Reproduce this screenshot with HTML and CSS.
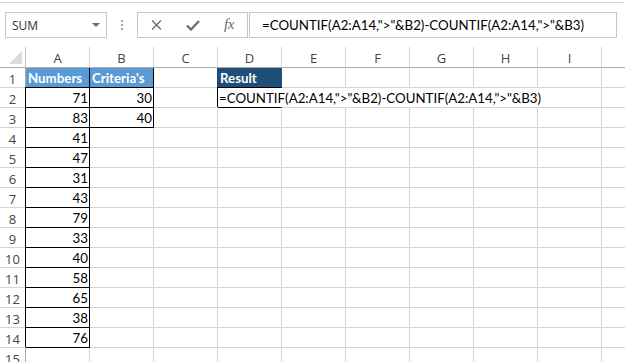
FILE: index.html
```html
<!DOCTYPE html>
<html>
<head>
<meta charset="utf-8">
<link rel="stylesheet" href="styles.css">
</head>
<body>
<div class="toolbar">
  <div class="namebox"><span>SUM</span><svg class="dd" width="8" height="4" viewBox="0 0 8 4"><path d="M0 0H8L4 4Z" fill="#6d6d6d"/></svg></div>
  <div class="grip"><i></i><i></i><i></i></div>
  <div class="fbtns">
    <svg class="ic-x" width="11" height="10" viewBox="0 0 11 10"><path d="M1 0.5L10 9.5M10 0.5L1 9.5" stroke="#707070" stroke-width="1.4" fill="none"/></svg>
    <svg class="ic-ok" width="14" height="11" viewBox="0 0 14 11"><path d="M1 5.5L5 9.5L13 1" stroke="#707070" stroke-width="2.4" fill="none"/></svg>
    <span class="fx">fx</span>
  </div>
  <div class="finput">=COUNTIF(A2:A14,"&gt;"&amp;B2)-COUNTIF(A2:A14,"&gt;"&amp;B3)</div>
</div>
<div class="sheet">
  <div class="corner"><svg width="13" height="13" viewBox="0 0 13 13"><path d="M13 0V13H0Z" fill="#dcdcdc"/></svg></div>
  <div class="ch">A</div><div class="ch">B</div><div class="ch">C</div><div class="ch">D</div><div class="ch">E</div><div class="ch">F</div><div class="ch">G</div><div class="ch">H</div><div class="ch">I</div><div class="ch"></div>

  <div class="rh">1</div><div class="c hd bh">Numbers</div><div class="c hd bh">Criteria's</div><div class="c"></div><div class="c dk">Result</div><div class="c"></div><div class="c"></div><div class="c"></div><div class="c"></div><div class="c"></div><div class="c"></div>

  <div class="rh">2</div><div class="c n bx">71</div><div class="c n bx">30</div><div class="c"></div><div class="c bx fm">=COUNTIF(A2:A14,"&gt;"&amp;B2)-COUNTIF(A2:A14,"&gt;"&amp;B3)</div><div class="c ov"></div><div class="c ov"></div><div class="c ov"></div><div class="c ov"></div><div class="c"></div><div class="c"></div>

  <div class="rh">3</div><div class="c n bx">83</div><div class="c n bx">40</div><div class="c"></div><div class="c"></div><div class="c"></div><div class="c"></div><div class="c"></div><div class="c"></div><div class="c"></div><div class="c"></div>

  <div class="rh">4</div><div class="c n bx">41</div><div class="c"></div><div class="c"></div><div class="c"></div><div class="c"></div><div class="c"></div><div class="c"></div><div class="c"></div><div class="c"></div><div class="c"></div>

  <div class="rh">5</div><div class="c n bx">47</div><div class="c"></div><div class="c"></div><div class="c"></div><div class="c"></div><div class="c"></div><div class="c"></div><div class="c"></div><div class="c"></div><div class="c"></div>

  <div class="rh">6</div><div class="c n bx">31</div><div class="c"></div><div class="c"></div><div class="c"></div><div class="c"></div><div class="c"></div><div class="c"></div><div class="c"></div><div class="c"></div><div class="c"></div>

  <div class="rh">7</div><div class="c n bx">43</div><div class="c"></div><div class="c"></div><div class="c"></div><div class="c"></div><div class="c"></div><div class="c"></div><div class="c"></div><div class="c"></div><div class="c"></div>

  <div class="rh">8</div><div class="c n bx">79</div><div class="c"></div><div class="c"></div><div class="c"></div><div class="c"></div><div class="c"></div><div class="c"></div><div class="c"></div><div class="c"></div><div class="c"></div>

  <div class="rh">9</div><div class="c n bx">33</div><div class="c"></div><div class="c"></div><div class="c"></div><div class="c"></div><div class="c"></div><div class="c"></div><div class="c"></div><div class="c"></div><div class="c"></div>

  <div class="rh">10</div><div class="c n bx">40</div><div class="c"></div><div class="c"></div><div class="c"></div><div class="c"></div><div class="c"></div><div class="c"></div><div class="c"></div><div class="c"></div><div class="c"></div>

  <div class="rh">11</div><div class="c n bx">58</div><div class="c"></div><div class="c"></div><div class="c"></div><div class="c"></div><div class="c"></div><div class="c"></div><div class="c"></div><div class="c"></div><div class="c"></div>

  <div class="rh">12</div><div class="c n bx">65</div><div class="c"></div><div class="c"></div><div class="c"></div><div class="c"></div><div class="c"></div><div class="c"></div><div class="c"></div><div class="c"></div><div class="c"></div>

  <div class="rh">13</div><div class="c n bx">38</div><div class="c"></div><div class="c"></div><div class="c"></div><div class="c"></div><div class="c"></div><div class="c"></div><div class="c"></div><div class="c"></div><div class="c"></div>

  <div class="rh">14</div><div class="c n bx">76</div><div class="c"></div><div class="c"></div><div class="c"></div><div class="c"></div><div class="c"></div><div class="c"></div><div class="c"></div><div class="c"></div><div class="c"></div>

  <div class="rh">15</div><div class="c"></div><div class="c"></div><div class="c"></div><div class="c"></div><div class="c"></div><div class="c"></div><div class="c"></div><div class="c"></div><div class="c"></div><div class="c"></div>
</div>
</body>
</html>
```

FILE: styles.css
```css
html, body {
  margin: 0;
  padding: 0;
  background: #ffffff;
}
body {
  width: 625px;
  height: 362px;
  overflow: hidden;
}

/* ---------- formula bar ---------- */
.toolbar {
  margin-top: 2px;
  border-top: 1px solid #d9d9d9;
  height: 45px;
  box-sizing: border-box;
  padding: 9px 0 0 5px;
  display: flex;
  align-items: flex-start;
}
.namebox {
  width: 102px;
  height: 26px;
  box-sizing: border-box;
  border: 1px solid #c6c6c6;
  display: flex;
  align-items: center;
  justify-content: space-between;
  padding: 0 6px 0 6px;
  font-family: "Open Sans", "Noto Sans", sans-serif;
  font-size: 12px;
  color: #333333;
}
.namebox span {
  margin-top: 1px;
}
.dd {
  display: block;
}
.grip {
  margin: 8px 0 0 14px;
  display: flex;
  flex-direction: column;
  gap: 2px;
}
.grip i {
  display: block;
  width: 2px;
  height: 2px;
  background: #a6a6a6;
}
.fbtns {
  margin-left: 14px;
  width: 111px;
  height: 26px;
  box-sizing: border-box;
  border: 1px solid #c6c6c6;
  display: flex;
  align-items: center;
  padding-left: 13px;
}
.ic-x {
  display: block;
}
.ic-ok {
  display: block;
  margin-left: 24px;
}
.fx {
  margin-left: 24px;
  font-family: "Liberation Serif", serif;
  font-style: italic;
  font-size: 15px;
  color: #6a6a6a;
  letter-spacing: -0.5px;
  line-height: 1;
  margin-top: -1px;
}
.finput {
  margin-left: 1px;
  width: 368px;
  height: 26px;
  box-sizing: border-box;
  border: 1px solid #c6c6c6;
  padding: 0 0 0 12px;
  font-family: Lato, "Liberation Sans", sans-serif;
  font-size: 13.3px;
  line-height: 24px;
  color: #000000;
  white-space: nowrap;
  overflow: hidden;
}

/* ---------- sheet grid ---------- */
.sheet {
  display: grid;
  grid-template-columns: 26px repeat(10, 64px);
  grid-template-rows: 21px repeat(15, 20px);
  width: 625px;
  overflow: hidden;
}
.corner,
.ch,
.rh,
.c {
  box-sizing: border-box;
  border-right: 1px solid #d4d4d4;
  border-bottom: 1px solid #d4d4d4;
}
.corner {
  border-right-color: #c8c8c8;
  border-bottom-color: #ababab;
  display: flex;
  align-items: flex-end;
  justify-content: flex-end;
  padding: 0 3px 3px 0;
}
.corner svg {
  display: block;
}
.ch {
  border-bottom-color: #ababab;
  display: flex;
  align-items: center;
  justify-content: center;
  padding-top: 1px;
  font-family: "Open Sans", "Noto Sans", sans-serif;
  font-size: 13px;
  color: #444444;
}
.rh {
  border-right-color: #ababab;
  display: flex;
  align-items: center;
  justify-content: center;
  padding-top: 2px;
  font-family: "Open Sans", "Noto Sans", sans-serif;
  font-size: 13px;
  color: #444444;
}
.c {
  display: flex;
  align-items: flex-end;
  padding: 0 1px 0 2px;
  font-family: Lato, "Liberation Sans", sans-serif;
  font-size: 13.3px;
  line-height: 17px;
  color: #000000;
  white-space: nowrap;
}
.n {
  justify-content: flex-end;
}
.bx {
  border-right-color: #000000;
  border-bottom-color: #000000;
  box-shadow: -1px -1px 0 #000000;
}
.hd {
  background: #5b9bd5;
  color: #ffffff;
  font-weight: bold;
}
.bh {
  border-right-color: #000000;
  border-bottom-color: #000000;
}
.dk {
  background: #1f4e78;
  color: #ffffff;
  font-weight: bold;
  border-right-color: #1f4e78;
  border-bottom-color: #000000;
  box-shadow: -1px 0 0 #1f4e78;
}
.fm {
  padding-left: 1px;
  border-right-color: transparent;
}
.ov {
  border-right-color: transparent;
}
```
